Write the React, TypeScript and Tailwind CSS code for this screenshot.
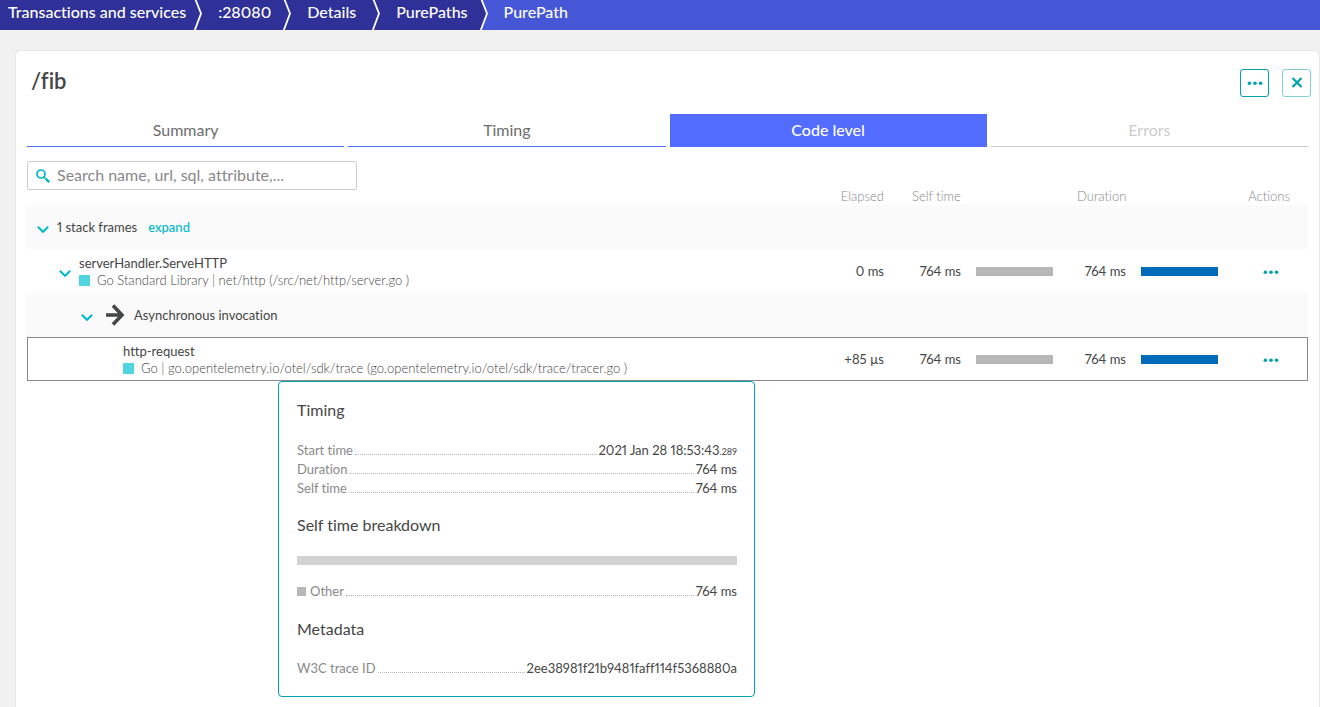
import React, { useState } from "react";

interface Frame {
  id: string;
  level: number;
  title: string;
  details?: string;
  isOpen?: boolean;
  isAsync?: boolean;
  isSelected?: boolean;
  canExpand?: boolean;
  elapsed?: string;
  selfTime?: string;
  duration?: string;
}

const breadcrumbs = [
  { name: "Transactions and services", className: "pl-2 pr-2" },
  { name: ":28080", className: "pl-4 pr-3" },
  { name: "Details", className: "px-4" },
  { name: "PurePaths", className: "pl-4 pr-3" },
];

const tabs = [
  { name: "Summary", disabled: false },
  { name: "Timing", disabled: false },
  { name: "Code level", disabled: false },
  { name: "Errors", disabled: true },
];

const frames: Frame[] = [
  { id: "stack", level: 0, title: "1 stack frames", isOpen: true, canExpand: true },
  {
    id: "serve",
    level: 1,
    title: "serverHandler.ServeHTTP",
    details: "Go Standard Library | net/http (/src/net/http/server.go )",
    isOpen: true,
    elapsed: "0 ms",
    selfTime: "764 ms",
    duration: "764 ms",
  },
  { id: "async", level: 2, title: "Asynchronous invocation", isOpen: true, isAsync: true },
  {
    id: "request",
    level: 3,
    title: "http-request",
    details: "Go | go.opentelemetry.io/otel/sdk/trace (go.opentelemetry.io/otel/sdk/trace/tracer.go )",
    isSelected: true,
    elapsed: "+85 µs",
    selfTime: "764 ms",
    duration: "764 ms",
  },
];

const indents = ["pl-[10px]", "pl-[32px]", "pl-[54px]", "pl-[96px]"];

function Separator({ last }: { last: boolean }) {
  return (
    <svg width="8" height="30" viewBox="0 0 8 30" className="shrink-0" aria-hidden="true">
      {last && <path d="M1.5 0 L7 13.5 L0.5 30 H8 V0 Z" fill="#4556d7" />}
      <path d="M1.3 -1 L7 13.5 L0.5 31" fill="none" stroke="#fff" strokeWidth="1.8" />
    </svg>
  );
}

function Chevron() {
  return (
    <svg width="12" height="12" viewBox="0 0 12 12" aria-hidden="true">
      <path d="M0.8 4.8 L6 9.8 L11.2 4.8" fill="none" stroke="#00b9cc" strokeWidth="2" />
    </svg>
  );
}

function Dots() {
  return (
    <svg width="16" height="6" viewBox="0 0 16 6" fill="#00a1b2" aria-hidden="true">
      <circle cx="2.4" cy="3.2" r="1.8" />
      <circle cx="8" cy="3.2" r="1.8" />
      <circle cx="13.6" cy="3.2" r="1.8" />
    </svg>
  );
}

function TimeCell({ value, barClass }: { value?: string; barClass: string }) {
  return (
    <td className="p-0">
      {value && (
        <div className="flex items-center gap-[15px] pl-2 pr-[10px]">
          <span className="flex-1 pt-0.5 text-right whitespace-nowrap">{value}</span>
          <span className={`h-[9px] w-[77px] ${barClass}`} />
        </div>
      )}
    </td>
  );
}

function FrameRow({ frame }: { frame: Frame }) {
  return (
    <tr
      className={`h-11 ${
        frame.isSelected ? "outline outline-1 -outline-offset-1 outline-[#898989]" : "odd:bg-[#fafafa]"
      }`}
    >
      <td className="p-0">
        <div className={`flex items-center ${indents[frame.level]}`}>
          {frame.isOpen && (
            <button type="button" aria-label="Collapse" className="mr-2 pt-0.5">
              <Chevron />
            </button>
          )}
          {frame.isAsync && (
            <svg width="18" height="22" viewBox="0 0 18 22" className="ml-[5px] mr-[10px]" aria-hidden="true">
              <path d="M0 11 H16 M7 1.5 L16 11 L7 20.5" fill="none" stroke="#454646" strokeWidth="3.6" />
            </svg>
          )}
          <div className={`leading-[17px] whitespace-nowrap ${frame.details ? "pt-0.5" : ""}`}>
            <div>
              {frame.title}
              {frame.canExpand && (
                <button type="button" className="ml-[11px] font-medium text-[#00b9cc]">
                  expand
                </button>
              )}
            </div>
            {frame.details && (
              <div className="flex items-center gap-[7px] font-light">
                <span className="size-[11px] bg-[#4fd5e0]" />
                {frame.details}
              </div>
            )}
          </div>
        </div>
      </td>
      <td className="p-0 pt-0.5 pr-[14px] text-right">{frame.elapsed}</td>
      <TimeCell value={frame.selfTime} barClass="bg-[#b7b7b7]" />
      <TimeCell value={frame.duration} barClass="bg-[#006bba]" />
      <td className="p-0 pl-[6px]">
        {frame.duration && (
          <button type="button" aria-label="Actions" className="mx-auto block p-1 pt-1.5">
            <Dots />
          </button>
        )}
      </td>
    </tr>
  );
}

function DetailLine({ label, children, marker }: { label: string; children: React.ReactNode; marker?: boolean }) {
  return (
    <div className="flex items-baseline leading-[19px]">
      <dt className="text-[#898989]">
        {marker && <span className="mr-1 inline-block size-[9px] bg-[#b7b7b7]" />}
        {label}
      </dt>
      <span className="mx-0.5 flex-1 border-b border-dotted border-[#b7b7b7]" />
      <dd>{children}</dd>
    </div>
  );
}

function DetailsBox() {
  return (
    <section className="ml-[251px] w-[477px] rounded border border-[#00a1b2] bg-white pt-[19px] pr-[17px] pb-[18px] pl-[18px]">
      <h2 className="pb-0.5 text-base leading-[18px]">Timing</h2>
      <dl className="mt-5">
        <DetailLine label="Start time">
          2021 Jan 28 18:53:43<span className="text-[9px] leading-none">.289</span>
        </DetailLine>
        <DetailLine label="Duration">764 ms</DetailLine>
        <DetailLine label="Self time">764 ms</DetailLine>
      </dl>
      <h2 className="mt-[18px] pb-0.5 text-base leading-[18px]">Self time breakdown</h2>
      <div className="mt-5 h-[9px] bg-[#d2d2d2]" />
      <dl className="mt-[17px]">
        <DetailLine label="Other" marker>
          764 ms
        </DetailLine>
      </dl>
      <h2 className="mt-[19px] pb-0.5 text-base leading-[18px]">Metadata</h2>
      <dl className="mt-[19px]">
        <DetailLine label="W3C trace ID">2ee38981f21b9481faff114f5368880a</DetailLine>
      </dl>
    </section>
  );
}

export default function App() {
  const [activeTab, setActiveTab] = useState("Code level");
  const [search, setSearch] = useState("");

  return (
    <div className="flex min-h-screen flex-col bg-[#f1f1f1] font-['Lato','Noto_Sans',sans-serif] text-[13px] text-[#454646] proportional-nums [font-variant-ligatures:none]">
      <nav className="flex h-[30px] bg-[#4556d7] text-base leading-6 font-medium text-white">
        {breadcrumbs.map((item, index) => (
          <div key={item.name} className="flex bg-[#2f3199]">
            <a href="#" className={`whitespace-nowrap ${item.className}`}>
              {item.name}
            </a>
            <Separator last={index === breadcrumbs.length - 1} />
          </div>
        ))}
        <a href="#" className="px-4">
          PurePath
        </a>
      </nav>

      <main className="mt-5 ml-[15px] flex-1 rounded-t-md border border-b-0 border-[#e6e6e6] bg-white pb-[10px]">
        <header className="flex items-center justify-between pt-[18px] pr-2 pl-[15px]">
          <h1 className="pb-1 text-[22px] leading-6 font-semibold">/fib</h1>
          <div className="flex gap-[13px]">
            <button
              type="button"
              aria-label="More"
              className="flex h-7 w-[29px] items-center justify-center rounded-[3px] border border-[#00a1b2]"
            >
              <Dots />
            </button>
            <button
              type="button"
              aria-label="Close"
              className="flex h-7 w-[29px] items-center justify-center rounded-[3px] border border-[#7fd0d8]"
            >
              <svg width="12" height="12" viewBox="0 0 12 12" aria-hidden="true">
                <path d="M1.5 1 L10.5 10 M10.5 1 L1.5 10" stroke="#00a1b2" strokeWidth="2.2" />
              </svg>
            </button>
          </div>
        </header>

        <div className="px-[11px]">
          <div role="tablist" className="mt-[17px] grid grid-cols-4 gap-1">
            {tabs.map((tab) => (
              <button
                key={tab.name}
                type="button"
                role="tab"
                aria-selected={activeTab === tab.name}
                disabled={tab.disabled}
                onClick={() => setActiveTab(tab.name)}
                className={`h-[33px] border-b text-base leading-8 ${
                  tab.disabled
                    ? "border-[#cccccc] text-[#cccccc]"
                    : activeTab === tab.name
                      ? "border-[#526cff] bg-[#526cff] font-medium text-white"
                      : "border-[#526cff] text-[#6d6d6d]"
                }`}
              >
                {tab.name}
              </button>
            ))}
          </div>

          <label className="mt-[14px] flex h-[29px] w-[330px] items-center gap-[7px] rounded-[3px] border border-[#cccccc] px-2">
            <svg width="14" height="14" viewBox="0 0 14 14" fill="none" stroke="#00b9cc" aria-hidden="true">
              <circle cx="5" cy="5" r="4" strokeWidth="1.7" />
              <path d="M8 8 L13.2 13.2" strokeWidth="2.4" strokeDasharray="1.6 0.7 6" />
            </svg>
            <input
              type="text"
              aria-label="Search"
              placeholder="Search name, url, sql, attribute,..."
              value={search}
              onChange={(e) => setSearch(e.target.value)}
              className="min-w-0 flex-1 pb-0.5 text-base leading-6 outline-none placeholder:text-[#898989]"
            />
          </label>

          <table className="w-full table-fixed">
            <colgroup>
              <col />
              <col className="w-[80px]" />
              <col className="w-[165px]" />
              <col className="w-[165px]" />
              <col className="w-[80px]" />
            </colgroup>
            <thead className="text-left leading-[13px] text-[#898989]">
              <tr>
                <th className="p-0" aria-label="Frame" />
                <th className="p-0 pr-[14px] pb-0.5 text-right font-light">Elapsed</th>
                <th className="p-0 pb-0.5 pl-[14px] font-light">Self time</th>
                <th className="p-0 pb-0.5 pl-[14px] font-light">Duration</th>
                <th className="p-0 pr-[18px] pb-0.5 text-right font-light">Actions</th>
              </tr>
            </thead>
            <tbody>
              {frames.map((frame) => (
                <FrameRow key={frame.id} frame={frame} />
              ))}
            </tbody>
          </table>

          <DetailsBox />
        </div>
      </main>
    </div>
  );
}
